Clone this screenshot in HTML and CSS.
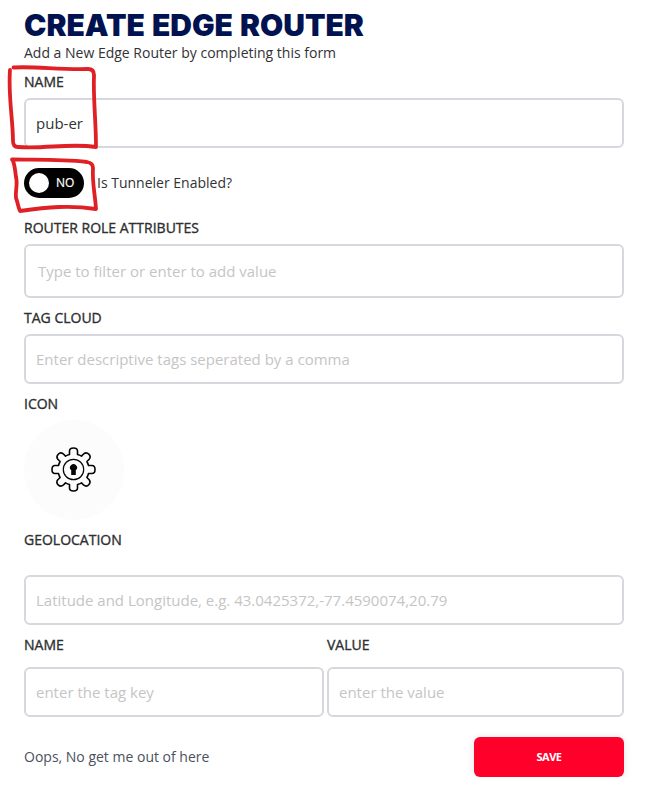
FILE: index.html
```
<!DOCTYPE html>
<html lang="en">
<head>
<meta charset="utf-8">
<title>Create Edge Router</title>
<link rel="stylesheet" href="styles.css">
</head>
<body>
<main class="form">
  <h1 class="title"><span>CREATE EDGE ROUTER</span></h1>
  <p class="subtitle"><span>Add a New Edge Router by completing this form</span></p>
  <div class="label name-label"><span>NAME</span></div>
  <div class="field value"><span>pub-er</span></div>
  <div class="toggle-row">
    <div class="toggle"><span class="knob"></span><span class="state">NO</span></div>
    <span class="toggle-text">Is Tunneler Enabled?</span>
  </div>
  <div class="label role-label"><span>ROUTER ROLE ATTRIBUTES</span></div>
  <div class="field roles"><span>Type to filter or enter to add value</span></div>
  <div class="label tag-label"><span>TAG CLOUD</span></div>
  <div class="field"><span>Enter descriptive tags seperated by a comma</span></div>
  <div class="label icon-label"><span>ICON</span></div>
  <div class="icon">
    <svg class="gear" width="46" height="46" viewBox="-22.500 -22.500 46 46" fill="none" stroke="#050505">
      <path stroke-width="1.6" stroke-linejoin="round" d="M-4-15V-18.500Q-4-21.500 0-21.500T4-18.500V-15Q6-14.500 8-13.400L10.300-15.700Q12.800-17.600 15.300-15.300T15.700-10.300L13.400-8Q14.500-6 15-4H18.500Q21.500-4 21.500 0T18.500 4H15Q14.500 6 13.400 8L15.700 10.300Q17.600 12.800 15.300 15.300T10.300 15.700L8 13.400Q6 14.500 4 15V18.500Q4 21.500 0 21.500T-4 18.500V15Q-6 14.500-8 13.400L-10.300 15.700Q-12.800 17.600-15.300 15.300T-15.700 10.300L-13.400 8Q-14.500 6-15 4H-18.500Q-21.500 4-21.500 0T-18.500-4H-15Q-14.500-6-13.400-8L-15.700-10.300Q-17.600-12.800-15.300-15.300T-10.300-15.700L-8-13.400Q-6-14.500-4-15Z"/>
      <circle r="10.200" stroke-width="1.200"/>
      <path fill="#050505" stroke="none" d="M-2.300 5.500V.8A3.500 3.500 0 1 1 2.300 .8V5.500Z"/>
    </svg>
  </div>
  <div class="label geo-label"><span>GEOLOCATION</span></div>
  <div class="field"><span>Latitude and Longitude, e.g. 43.0425372,-77.4590074,20.79</span></div>
  <div class="pairs">
    <div class="label"><span>NAME</span></div>
    <div class="label"><span>VALUE</span></div>
    <div class="field"><span>enter the tag key</span></div>
    <div class="field"><span>enter the value</span></div>
  </div>
  <div class="actions">
    <a class="cancel">Oops, No get me out of here</a>
    <button class="save">SAVE</button>
  </div>
  <svg class="marks" width="110" height="220" viewBox="0 0 110 220" fill="none" stroke="#df2126" stroke-width="3.800" stroke-linecap="round" stroke-linejoin="round">
    <path d="M13.500 67.500C35 66 60 70 88 69Q94 69 94 75C93 98 96 120 96 147C70 143 45 149 18 147Q13 147 13 141C13 120 8 95 10 70"/>
    <path d="M12 159.500C37 160 60 159 87 162Q93 163 93 168C92 182 95 194 96 209C70 205 48 207 20 211C18 207 18 203 16 198C15 191 18 185 16 177C15 170 15 166 13 161"/>
  </svg>
</main>
</body>
</html>
```
FILE: styles.css
```
* { box-sizing: border-box; }
body {
  margin: 0;
  background: #fff;
  color: #323234;
  font: 400 14px/20px "Open Sans", sans-serif;
}
.form {
  position: relative;
  width: 648px;
  padding: 8px 24px 0;
}
.title {
  margin: 0;
  height: 34px;
  color: #00124f;
  font: 900 30px/34px Inter, sans-serif;
  word-spacing: 1px;
  white-space: nowrap;
}
.subtitle { margin: 1px 0 0; height: 20px; }
.label {
  height: 20px;
  -webkit-text-stroke: 0.35px #2a2a2c;
}
.name-label { margin: 9px 0 6px; }
.field {
  display: flex;
  align-items: center;
  height: 50px;
  padding: 0 10px 1px;
  border: 2px solid #d6d8de;
  border-radius: 6px;
  color: #c5c5c5;
  font-size: 15px;
  white-space: nowrap;
}
.value { color: #323234; }
.toggle-row {
  display: flex;
  align-items: center;
  gap: 13px;
  height: 30px;
  margin-top: 20px;
}
.toggle {
  display: flex;
  align-items: center;
  gap: 7px;
  width: 60px;
  height: 30px;
  padding-left: 5px;
  border-radius: 15px;
  background: #000;
}
.knob { width: 20px; height: 20px; border-radius: 50%; background: #fff; }
.state { color: #fff; font-size: 12px; -webkit-text-stroke: 0.2px #fff; }
.role-label { margin: 20px 0 6px; }
.roles { height: 54px; padding-left: 12px; }
.tag-label { margin: 10px 0 6px; }
.icon-label { margin: 10px 0 6px; }
.icon {
  display: grid;
  place-items: center;
  width: 100px;
  height: 100px;
  border-radius: 50%;
  background: #fcfcfc;
}
.geo-label { margin: 10px 0 25px; }
.pairs {
  display: grid;
  grid-template-columns: 300px 297px;
  gap: 12px 3px;
  margin-top: 10px;
}
.actions {
  display: flex;
  justify-content: space-between;
  align-items: center;
  margin-top: 20px;
}
.cancel { color: #4c505e; }
.save {
  width: 150px;
  height: 40px;
  padding: 0;
  border: 0;
  border-radius: 6px;
  background: #ff002a;
  box-shadow: 0 1px 8px #0000001c;
  color: #fff;
  font: 700 11px/20px "Open Sans", sans-serif;
  letter-spacing: -0.5px;
}
.marks { position: absolute; left: 0; top: 0; }
```
